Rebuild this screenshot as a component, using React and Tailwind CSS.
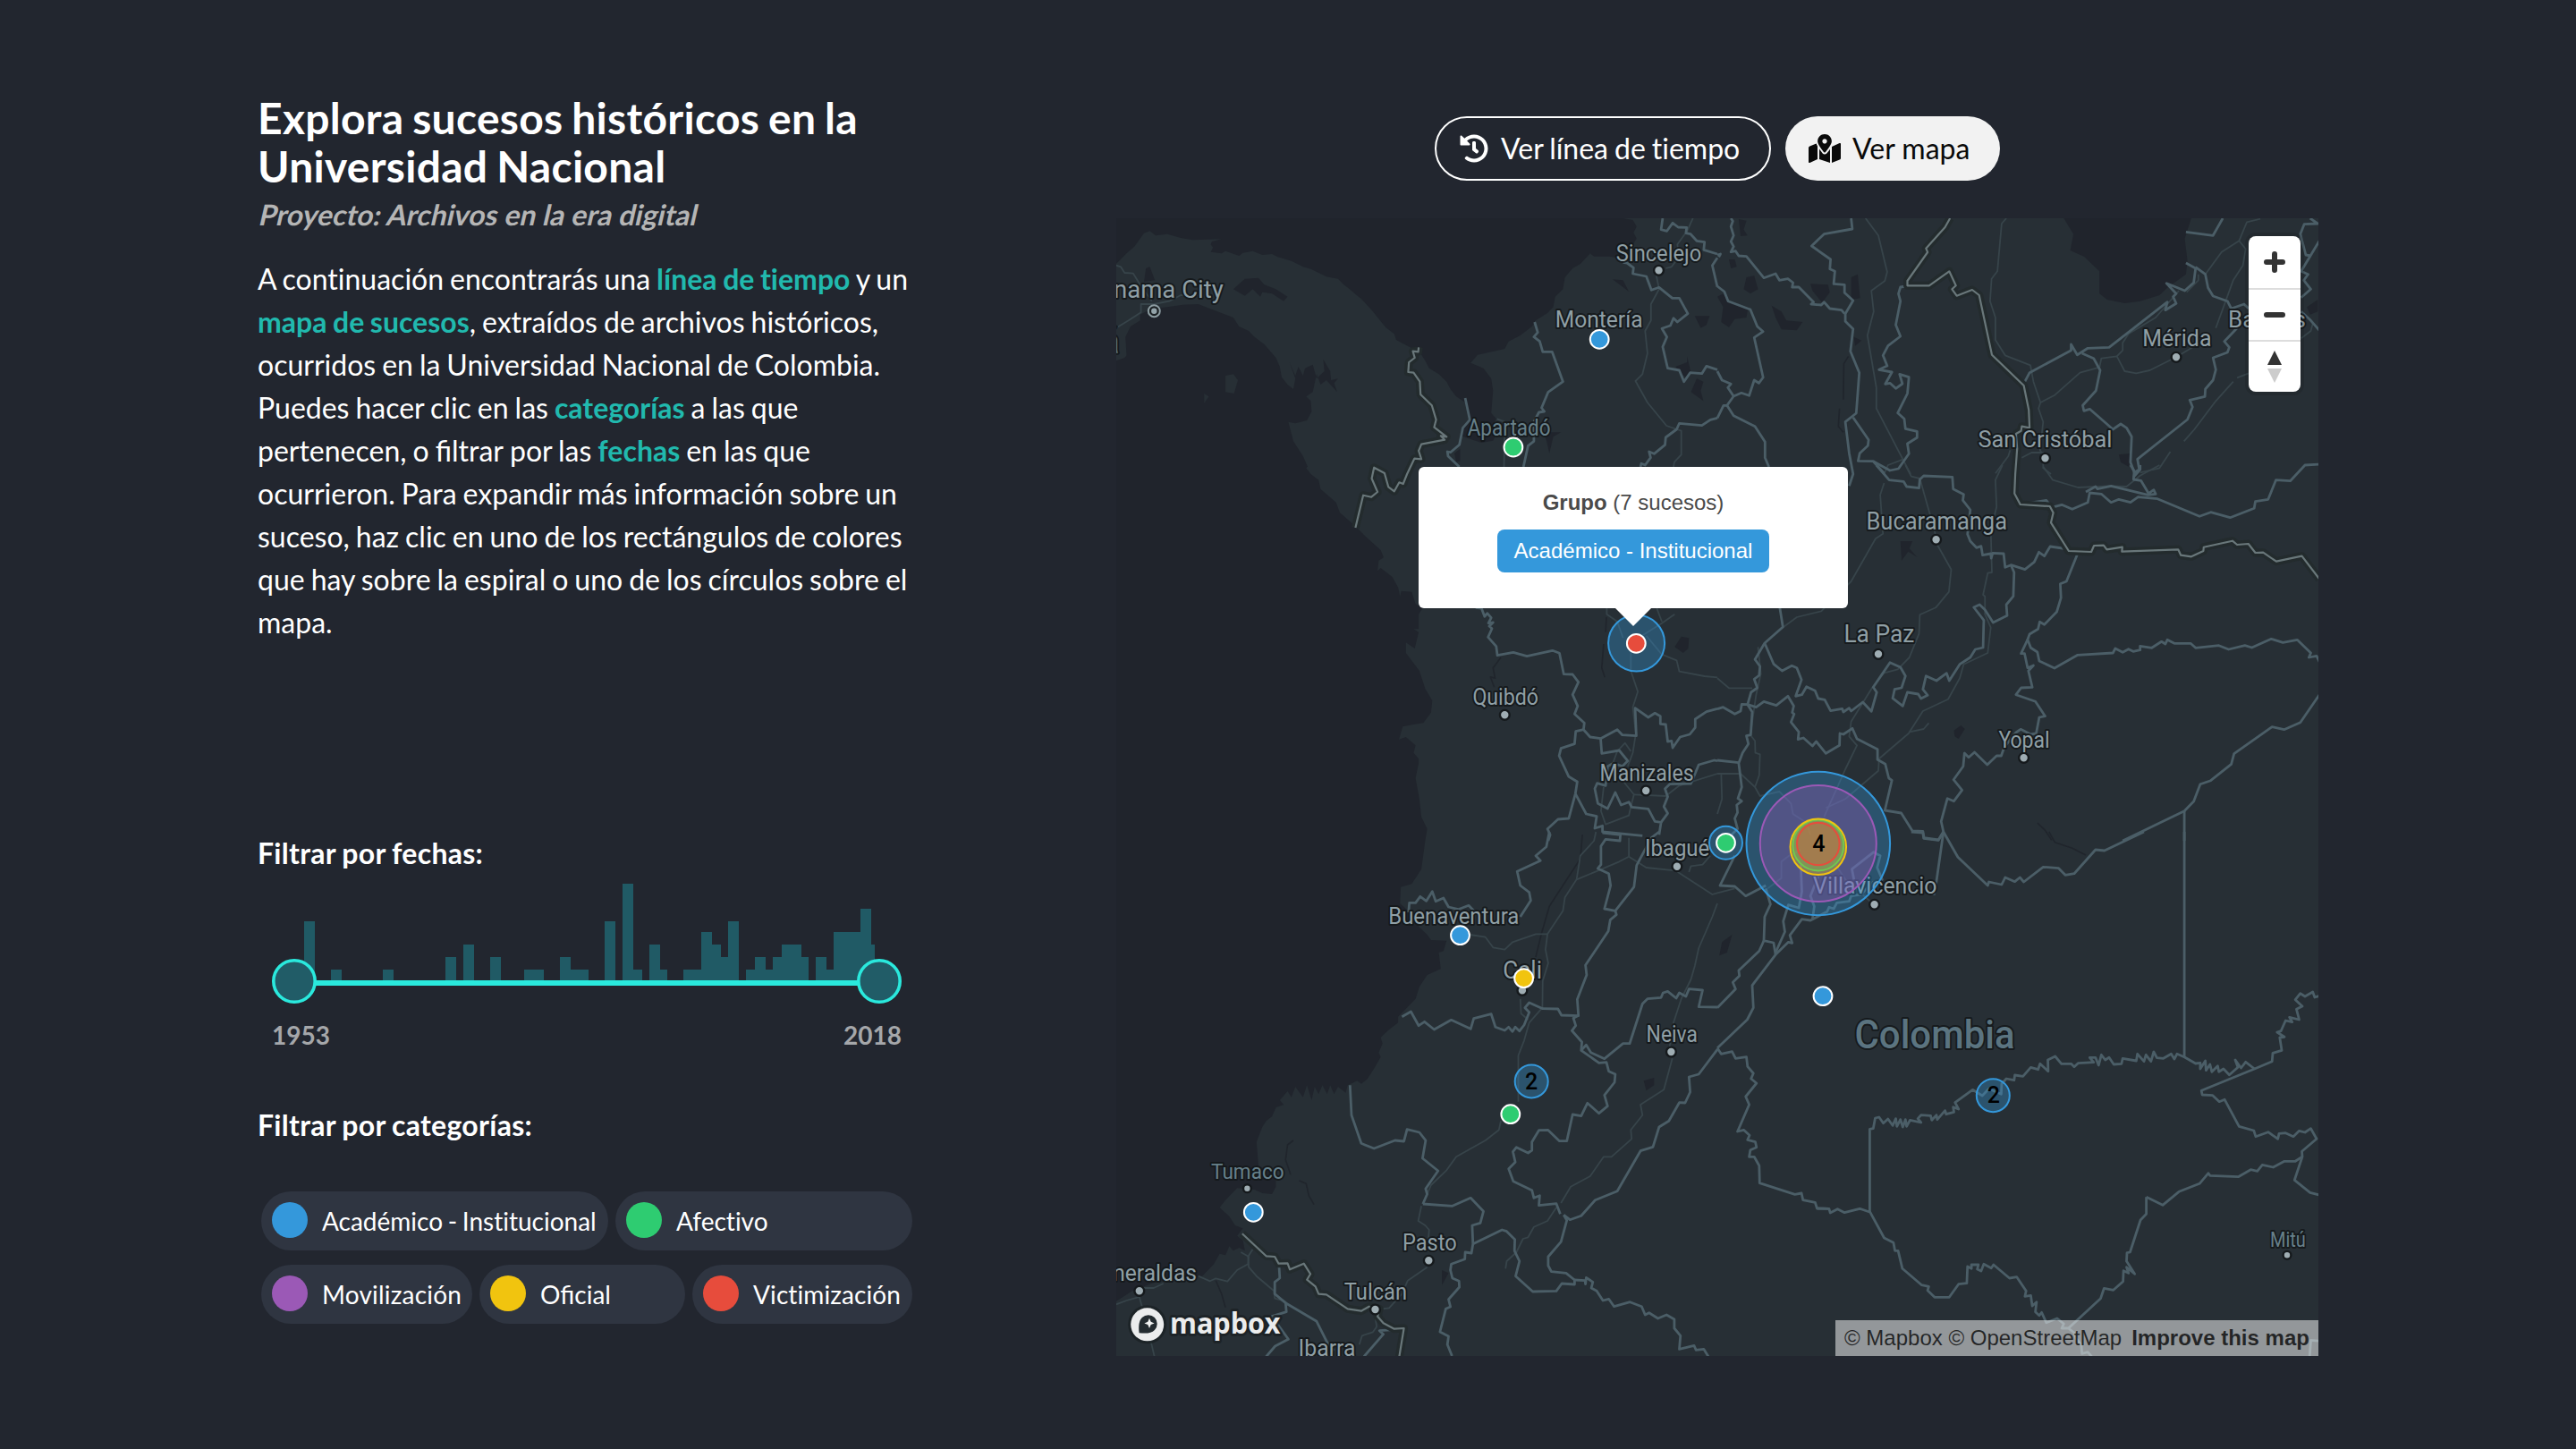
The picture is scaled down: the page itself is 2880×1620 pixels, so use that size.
import React from "react";
import { FaHistory, FaMapMarkedAlt } from "react-icons/fa";

/* ---------- Map geometry ---------- */

// Each survey tile keeps its own origin and an uneven x / y resolution.
const KX = 680 / 1568;
const KY = 1 / 3;
const ORIGINS = {
  a: [1240, 110],
  b: [1920, 110],
  c: [1240, 520],
  d: [1920, 520],
  e: [1240, 930],
  f: [1920, 930],
  g: [1240, 1270],
  h: [1920, 1270],
};

const project = (tile, raw) => {
  const [ox, oy] = ORIGINS[tile];
  return raw
    .trim()
    .split(/\s+/)
    .map((pair) => {
      const [x, y] = pair.split(",").map(Number);
      return `${(ox + x * KX).toFixed(1)},${(oy + y * KY).toFixed(1)}`;
    })
    .join(" ");
};

const caribbean = project(
  "a",
  "18,402 18,555 30,540 45,520 65,497 80,470 90,452 105,445 120,460 150,455 185,468 215,475 290,472 265,480 262,490 268,500 262,515 290,520 300,512 335,528 345,518 370,512 395,525 420,522 435,532 470,545 500,565 520,572 560,598 590,605 605,625 620,640 640,662 650,672 680,715 705,755 715,770 735,790 740,810 780,838 800,850 815,880 825,905 850,925 870,950 880,975 895,1000 918,1020 930,1075 915,1100 905,1130 925,1140 960,1155 990,1148 1000,1120 992,1090 998,1075 985,1055 990,980 985,940 965,905 932,887 950,860 1020,840 1030,815 1060,795 1090,765 1100,745 1130,720 1145,700 1150,665 1170,640 1175,600 1195,570 1215,555 1240,520 1250,530 1290,530 1330,540 1345,500 1360,470 1352,450 1360,430 1350,408 1325,402"
);

const pacific = [
  project(
    "a",
    "18,880 40,870 45,862 42,800 55,765 80,745 80,725 110,705 150,700 190,692 230,690 270,710 320,735 335,765 360,780 375,800 400,825 430,870 440,900 445,935 460,960 475,975 480,940 465,885 480,930 488,900 500,930 505,905 525,893 535,940 555,915 552,875 570,915 572,945 590,940 580,955 588,985 560,945 545,960 535,925 525,985 508,1000 520,1015 522,1050 510,1080 480,1090 462,1085 475,1150 490,1180 500,1200 512,1235"
  ),
  project(
    "c",
    "508,10 520,30 540,50 545,80 585,125 595,160 635,205 660,238 700,285 708,310 695,320 692,355 700,345 730,375 745,410 750,440 753,422 780,425 790,465 808,480 798,500 798,550 785,550 798,560 788,615 765,595 765,630 800,690 815,750 833,790 830,830 810,865 785,870 757,877 747,920 765,912 790,940 785,965 798,985 798,1000 790,1050 800,1120 805,1180 820,1220"
  ),
  project(
    "e",
    "815,30 805,125 780,175 752,185 750,240 775,270 800,320 820,345 830,363 870,365 862,400 850,405 855,460 820,480 800,520 790,560 745,620 745,640 720,665 700,690 705,710 695,740 700,755 685,790 680,800 665,830 650,845 640,835 615,850 610,875 590,855 580,880 570,850 562,880 550,850 540,880 530,855 522,900 510,850 500,890 480,855 470,890 460,870 440,900 450,915 430,925 420,955 405,970 395,990 380,1040 385,1120 400,1130 430,1140 430,1190 420,1215 395,1212"
  ),
  project(
    "g",
    "375,180 330,175 300,215 285,240 310,270 325,300 345,310 330,335 345,350 350,385 335,375 320,385 310,370 300,400 285,395 270,430 240,470 200,480 120,490 60,520 18,555"
  ),
  "1248,1455 1248,404",
].join(" ");

const water = [
  project("b", "893,402 918,455 910,510 945,530 985,580 985,655 1005,675 1050,687 1090,680 1140,660 1160,635 1208,590 1212,545 1205,470 1215,430 1222,402"),
  project("a", "320,640 350,605 385,602 400,625 430,640 460,665 450,680 420,655 395,650 390,665 370,640 350,662"),
  project("a", "95,570 105,565 118,610 90,615"),
  project("a", "1510,730 1548,730 1540,760 1525,770"),
  project("a", "1460,900 1490,885 1490,865 1500,920 1485,935"),
  project("a", "1515,940 1532,950 1525,980 1532,1015 1500,985"),
  project("a", "1120,1120 1165,1120 1145,1135 1135,1190 1128,1150"),
  project("a", "1298,607 1325,610 1340,648"),
  project("a", "890,1190 905,1175 905,1215 895,1220"),
  project("b", "55,405 75,410 68,440 78,460 60,462"),
  project("b", "30,540 45,540 50,565 35,570"),
  project("b", "75,600 95,595 105,640 85,655 68,640"),
  project("b", "240,622 285,625 290,650 270,685 245,645"),
  project("b", "345,600 362,590 368,670 345,675"),
  project("b", "0,665 15,655 30,685 80,700 75,735 45,740 30,768 10,750 15,700"),
  project("b", "140,695 165,715 178,745 220,750 205,778 165,775 150,735"),
  project("b", "352,800 372,812 355,830"),
  project("b", "1035,1195 1070,1190 1060,1235 1040,1220"),
  project("b", "1520,700 1548,675 1548,715 1528,725"),
  project("d", "472,255 503,255 495,280 515,308 492,290 475,320"),
  project("d", "610,890 628,873 638,885 622,918 612,910"),
  project("c", "1458,610 1475,575 1495,580 1493,615 1480,630"),
  project("e", "1378,835 1405,825 1405,850 1385,868"),
  project("g", "858,450 875,460 858,500"),
  project("f", "5,415 12,370 38,345 25,405"),
];

const islands = [
  project("a", "300,930 320,925 332,945 322,990 300,985"),
  project("a", "245,990 257,1000 245,1022"),
];

const provinceLines = [
  ["a", "1427,402 1423,440 1438,445 1453,418 1467,432 1489,433 1487,452 1499,455 1515,478 1535,482 1533,508 1568,522"],
  ["a", "1568,535 1555,560 1568,632"],
  ["a", "1325,550 1335,552 1352,568 1350,588 1385,597 1398,643 1418,634 1452,670 1470,670 1492,722 1465,750 1455,737 1447,762 1425,772 1438,800 1427,833 1440,905 1470,912 1482,950 1498,920 1528,923 1540,898 1568,910"],
  ["a", "1097,750 1105,785 1095,800 1110,815 1118,850 1142,850 1170,950 1132,985 1115,1038 1122,1050 1108,1053 1095,1085 1095,1150 1080,1165 1068,1236"],
  ["a", "918,1005 930,1078 912,1105 903,1162 880,1187 872,1185 874,1200 903,1236"],
  ["a", "1568,1072 1550,1078 1528,1097 1470,1090 1463,1110 1435,1137 1433,1162 1405,1192 1392,1185 1396,1205 1382,1230 1372,1225 1370,1236"],
  ["b", "0,630 18,648 28,680 85,708 103,765 118,782 95,802 118,936 107,955 95,945 82,997 62,988 42,999 25,1030 16,1030 0,1072"],
  ["b", "0,915 12,945 35,958 27,970 42,999"],
  ["b", "0,525 8,522 4,532"],
  ["b", "25,1030 42,1064 97,1100 123,1152 123,1205 133,1236"],
  ["b", "35,402 40,412 35,430 42,460 35,480 42,497 35,515 47,512 55,528 75,530 120,602 150,588 160,610 182,605 195,618 193,633 210,633 248,683 242,690 268,693 275,683 290,705 320,710 328,722"],
  ["b", "345,402 348,438 275,455 243,495 292,540 290,572 303,580 300,622 328,625 328,652 350,678 330,722 330,748 350,773 343,848 366,920 358,1056 330,1085 340,1190 350,1260 340,1300"],
  ["b", "350,1070 390,1145 388,1165 367,1190 363,1216 402,1217 430,1258"],
  ["b", "487,630 472,633 467,655 472,680 460,760 472,798 440,830 427,862 438,897 417,910 450,918 433,958 445,955 460,973 477,957 470,925 494,935 490,990 465,1055 482,1075 485,1108 515,1117 515,1138 490,1158 494,1192 467,1242 445,1248 402,1217"],
  ["b", "788,962 805,920 912,845 912,825 928,860 955,838 1010,835 1160,683 1155,710 1183,688 1175,665 1183,655 1158,620 1205,645 1228,618 1233,570 1208,552"],
  ["b", "1233,566 1258,590 1265,635 1278,663 1315,680 1325,705 1358,690 1370,705"],
  ["b", "940,855 970,872 987,912 976,980 942,1030 945,1048 960,1042 1020,1110 1040,1092 1055,1105 1068,1135 1065,1220 1075,1255 1088,1245 1083,1210 1212,1077 1225,1035 1218,1012 1257,1000 1258,975 1278,945 1285,910 1278,870 1315,852 1320,835 1307,815 1340,770"],
  ["b", "1208,448 1278,460 1303,402"],
  ["b", "1528,402 1548,420 1513,422 1503,455 1517,525 1530,528"],
  ["b", "1552,478 1505,580 1523,590 1512,610 1530,640 1505,668"],
  ["b", "1505,715 1530,745 1552,778"],
  ["d", "410,0 443,50 480,55 488,72 520,77 522,48 532,36 606,40 608,80 635,98 633,118 652,150 645,232 652,255 668,277 680,272 684,302 705,297 706,312 710,295 738,297 742,343 757,335 793,350 817,325 829,292 843,305 858,273 906,282"],
  ["d", "757,335 765,360 763,440 745,468 747,505 711,528 690,485 676,468 661,477 687,520 685,612 665,618 652,645 625,668 598,723 591,698 565,723 538,707 530,752 542,772 525,783 518,768 490,762 478,808 452,782 457,752 475,747 485,707 472,678 445,662 402,745 411,762 397,826 375,795 345,825 340,815 325,828 322,817 292,824 277,787 260,783 252,757 230,743 218,770 202,775 217,720 205,680 192,673 167,690 145,667 122,597"],
  ["d", "160,470 169,543 122,597 97,652 110,675 108,705 95,718 103,747 87,762 78,803"],
  ["d", "930,293 900,390 884,398 886,445 875,492 843,535 831,526 827,550 805,567 800,585 808,613 825,627 830,657 869,681 929,637 1020,630 1026,615 1045,628 1060,617 1072,625 1090,620 1090,607 1120,613 1145,592 1155,600 1160,586 1178,598 1220,598 1233,613 1293,605 1318,618 1360,605 1378,612 1428,583 1458,595 1495,586 1530,630 1525,645 1545,640 1552,660"],
  ["d", "800,585 783,632 792,632 800,680 815,672 802,690 812,745 783,747 770,770 820,793 845,842 830,846 822,900 808,903 782,886 770,897 740,945 732,975 720,975 696,1005 663,963 648,980 637,966 634,1010 609,1055 631,1090 610,1127 593,1118 577,1195 583,1230"],
  ["d", "781,132 848,118 862,142 888,133 915,148 955,125 960,93 990,97 1015,125 1035,115 1065,125 1085,107 1135,113 1243,172 1272,158 1322,176 1384,145 1387,122 1420,115 1440,50 1477,53 1515,0 1555,-3"],
  ["d", "950,90 975,72 980,80 1015,70 1110,100 1130,97 1125,83 1112,95 1092,52 1073,48 1075,20 1065,0"],
  ["d", "1090,0 1090,15 1073,40"],
  ["d", "1552,770 1503,863 1461,887 1430,878 1332,968 1325,1003 1272,1058 1245,1070 1228,1128 1204,1160 1045,1260"],
  ["d", "1204,1160 1204,1260"],
  ["d", "0,818 15,812 45,835 60,825 63,802 78,803 100,812 120,793 152,806 182,775 197,808 193,830 198,835 190,862 210,895 208,920 222,915 245,942 255,927 280,967 315,940 316,900 325,903 348,883 360,918 413,953 413,988 433,1003 442,1050 450,1057 432,1158 474,1167 503,1227 530,1228 533,1250 570,1257 583,1230"],
  ["d", "78,803 90,828 86,905 75,908 80,935 65,965 55,1000 63,1080 53,1118 63,1127 50,1140 52,1165 45,1185 52,1220 20,1260"],
  ["d", "0,990 55,998"],
  ["c", "945,478 960,480 968,508 975,497 985,512 978,530 990,528 980,540 987,548 977,577 998,608 1001,638 1042,628 1077,641 1143,622 1161,631 1172,701 1195,702 1210,728 1195,770 1208,808 1200,835 1225,865 1223,887 1203,893 1200,935 1165,950 1160,975 1185,1045 1207,1062 1202,1102 1185,1185 1157,1188 1130,1220 1137,1240 1132,1260"],
  ["c", "1223,887 1240,912 1267,917 1310,887 1323,905 1359,908 1356,815 1390,846 1407,832 1421,842 1421,868 1435,870 1440,927 1450,925 1453,948 1472,912 1497,903 1511,880 1511,852 1540,827 1568,817"],
  ["c", "1267,917 1270,967 1315,957 1337,992 1323,1010 1300,1000 1285,1010 1280,1075 1258,1067 1252,1085 1260,1135 1285,1152 1305,1098 1320,1140 1340,1130 1347,1147 1390,1153 1407,1195 1423,1198 1418,1240"],
  ["c", "1202,1102 1230,1170 1257,1178 1252,1218 1272,1210 1272,1230 1375,1243"],
  ["c", "1423,1198 1440,1168 1430,1145 1440,1112 1433,1085 1445,1070 1500,1068 1520,1005 1560,990 1568,992"],
  ["e", "1135,0 1127,50 1100,80 1112,97 1052,133 1060,180 1083,203 1087,230 1060,285"],
  ["e", "755,620 778,603 798,650 813,637 838,663 882,631 932,661 940,626 985,611 996,655 1020,666 1030,655 1040,670 1047,655 1058,668 1070,648 1083,605 1072,590 1083,573 1118,593 1157,594 1166,615 1210,617 1207,562 1231,480 1228,447 1287,333 1292,295 1308,278 1305,265 1277,258 1293,180 1288,140 1260,123 1268,110 1268,48 1280,25 1317,30 1318,10 1272,3"],
  ["e", "1305,265 1353,185 1360,112 1398,20 1418,0"],
  ["e", "772,270 774,238 790,238 802,217 818,232 833,200 842,233 862,222 875,252 900,260 927,247 940,265"],
  ["e", "1208,617 1197,625 1203,650 1193,667 1219,705 1217,733 1263,775 1282,773 1288,803 1305,813 1303,840 1277,883 1285,920 1263,944 1233,910 1217,953 1195,948 1180,1037 1161,1037 1131,1000 1108,1001 1090,1040 1090,1068 1080,1077 1050,1058 1041,1073 1047,1108 1030,1130 1042,1172 1090,1202 1095,1228 1110,1220 1108,1253 1153,1247 1163,1282"],
  ["e", "1217,733 1230,715 1242,740 1277,761 1325,710 1342,710 1375,577 1388,560 1423,556 1428,540 1440,535 1462,558 1470,540 1487,552 1495,527 1530,531 1520,587 1568,588"],
  ["e", "1568,730 1520,813 1495,822 1498,873 1485,909 1470,908 1443,970 1418,990 1402,1057 1370,1070 1310,1205 1253,1235 1217,1288 1188,1301 1172,1285"],
  ["e", "621,850 625,950 650,1045 683,1062 737,1035 760,1038 768,998 800,1008 816,1035 808,1095 848,1137 816,1197 820,1215 809,1248"],
  ["f", "500,0 530,3 532,22 570,28 583,0 620,85 697,180 700,168 733,177 742,153 767,167 780,153 790,168 840,118 880,122 897,145 920,140 975,60 998,63 1100,0"],
  ["f", "583,0 565,165 558,212"],
  ["f", "1204,0 1204,755 1233,777 1245,775 1245,795 1258,768 1260,800 1270,780 1275,805 1290,785 1293,805 1305,795 1320,815 1342,790 1335,765 1350,792 1362,772 1385,795 1248,868 1250,882 1277,884 1294,905 1308,898 1345,988 1383,1002 1388,1022 1420,1007 1445,1030 1448,1012 1465,1010 1485,1022 1500,1003 1515,1008 1530,995 1545,1030 1507,1072 1508,1090 1488,1168 1528,1210 1552,1218"],
  ["f", "1385,795 1430,770 1432,742 1455,733 1450,690 1462,688 1443,672 1453,668 1465,633 1482,638 1475,622 1500,630 1493,595 1508,585 1490,563 1503,542 1515,552 1535,537 1540,555 1552,550"],
  ["f", "1508,1090 1490,1105 1462,1105 1433,1125 1405,1117 1392,1138 1375,1133 1343,1157 1270,1153 1266,1145 1243,1180 1190,1207 1148,1252 1106,1225"],
  ["f", "1204,755 1185,745 1178,762 1170,745 1150,760 1133,758 1125,738 1118,770 1105,748 1100,770 1083,745 1080,768 1045,760 1042,778 1022,780 1010,757 1000,765 990,748 983,783 975,757 960,757 970,773 930,776 920,788 912,778 887,778 871,753 852,765 853,803 832,778 827,797 808,790 788,820 767,816 765,833 745,828 733,845 732,880 700,862 683,885 658,865 613,908 622,930 608,923 610,940 590,947 587,935 567,965 565,950 553,967 550,952 525,950 517,962 525,975 497,967 488,988 485,965 478,990 472,965 463,988 460,962 452,985 440,963 428,977 417,957 407,960 402,995 393,997 393,1276"],
  ["f", "0,725 10,745 38,737 47,760 75,755 78,787 93,810 87,828 101,843 73,888 82,915 52,1005 68,1000 83,1018 78,1033 98,1040 101,1058 85,1067 82,1090 95,1090 108,1120 109,1178 200,1216 217,1212 221,1235 252,1243 257,1263 288,1264"],
  ["f", "0,725 77,630 93,590 90,515 150,412 183,370 193,373 187,347 218,293 240,297 283,268 288,253 300,258 308,238 340,233 345,215 370,210 400,170 425,160 412,120 420,80 403,68 347,125 352,160"],
  ["f", "150,412 145,372 120,365 122,285 137,243 125,190"],
  ["f", "125,180 73,215 45,183 7,180 45,80"],
  ["f", "120,365 108,400 55,465 57,483 40,505 47,527 0,590"],
  ["f", "150,405 174,335 170,300 183,245 210,255 218,200 215,110"],
  ["f", "245,295 250,250 240,215 260,150"],
  ["g", "809,228 885,235 932,208 965,253 957,292 936,300 938,362 934,393 918,390 917,413 882,430 880,450 885,477 902,487 903,507 875,548 880,573 868,580 853,657 875,672 872,700 884,738"],
  ["g", "938,362 1013,315 1025,320 1046,347 1045,385 1058,420 1048,470 1092,522 1153,520 1167,495 1200,498 1200,483 1178,460 1140,455 1132,435 1132,405 1165,355 1180,283 1172,265"],
  ["g", "1200,483 1227,485 1228,497 1230,475 1247,490 1243,510 1257,520 1273,552 1288,547 1302,572 1343,557 1373,572 1382,600 1392,593 1415,612 1437,600 1457,615 1457,645 1473,670 1470,715 1508,703 1513,718 1533,715 1545,740"],
  ["g", "438,430 440,477 427,490 427,530 455,560 457,590 420,605 462,682 428,705 405,740"],
  ["g", "455,560 535,622 562,692 580,720"],
  ["g", "657,740 707,665 697,653 755,648"],
  ["h", "257,243 288,244 291,258 310,245 328,257 367,244 394,256 430,342 454,358 458,385 466,385 477,445 527,500 545,505 542,518 560,541 598,541 622,497 643,494 645,438 655,445 655,432 673,432 670,447 680,453 687,430 706,443 712,432 753,477 772,473 796,520 793,538 808,535 812,570 823,557 820,590 830,602 836,592 848,626 876,612 893,630 888,645 905,645 920,660 925,680 938,700 940,730 955,725 965,740"],
  ["h", "905,645 988,545 997,511 1021,517 1046,488 1047,452 1060,460 1055,440 1076,463 1055,420 1056,392 1064,390 1091,282 1106,262 1106,205"],
  ["h", "1527,740 1530,685 1552,688"],
].map(([t, p]) => project(t, p));

const countryLines = [
  project("a", "798,835 797,850 783,848 788,870 773,885 771,918 785,920 801,950 803,993 832,1030 843,1078 838,1103 870,1135 855,1132 865,1145 805,1160 798,1182 805,1210 787,1208 768,1260") +
    " " +
    project("c", "758,63 748,58 735,88 720,73 710,27 683,8 677,45 692,90 676,107 655,101 635,210"),
  project("b", "600,402 587,432 538,503 542,516 490,612 490,628 546,628 598,580 615,628 605,640 617,662 657,642 675,660 708,860 790,963 803,1045 805,1105 785,1100 783,1115 770,1125 773,1175 768,1260") +
    " " +
    project("d", "766,95 781,132 857,138 866,160 860,193 906,288 964,291 971,270 996,269 1004,283 1044,275 1043,290 1188,283 1195,302 1222,307 1253,288 1254,275 1328,254 1340,267 1369,264 1387,294 1407,293 1441,323 1507,305 1552,382"),
  project("g", "343,328 405,403 427,405 437,428 460,427 466,448 502,428 519,463 510,482 532,505 540,530 560,532 615,580 650,587 670,572 697,580 692,605 707,628 735,647 760,645 748,740"),
];

const roads = [
  ["a", "1505,402 1490,445 1465,490 1470,530 1450,565 1435,570"],
  ["a", "1410,590 1418,640 1397,690 1397,745 1382,780 1388,855 1375,925 1357,948 1388,1020 1437,1098 1475,1115 1475,1195 1457,1220 1455,1236"],
  ["a", "18,770 50,745 82,718 82,690 115,690 155,680 185,660 230,660"],
  ["a", "18,560 30,565 40,585 62,587 80,625 110,680"],
  ["a", "1000,1075 1020,1085 1018,1236"],
  ["b", "382,402 415,460 438,582 432,612 397,645 403,715 387,795 410,970 410,1040 498,1260"],
  ["b", "745,402 733,420 722,580 707,605 703,680 717,735 717,810 742,862 807,895 815,950 833,1020 828,1040 840,1085 832,1180 845,1207"],
  ["b", "833,1020 870,995 935,920 985,902 990,872 1030,865 1050,915 1080,922 1115,912 1183,868 1250,815"],
  ["b", "1030,865 1045,845 1045,820 1060,790 1130,735 1190,645"],
  ["b", "1240,590 1240,610 1210,650"],
  ["b", "1258,590 1300,515 1345,478 1362,505 1355,560 1330,610 1305,700 1285,770"],
  ["b", "1345,478 1365,415 1400,404"],
  ["b", "1203,1150 1230,1110 1285,1015 1330,950"],
  ["b", "1340,937 1370,922"],
  ["b", "1505,805 1530,780 1535,755"],
  ["b", "717,1258 750,1200 755,1180"],
  ["b", "785,1205 810,1188 840,1188 840,1240 860,1260"],
  ["b", "1168,1185 1140,1240 1090,1255"],
  ["b", "430,1260 440,1230 480,1210"],
  ["d", "485,0 500,38 522,45 548,165 564,240"],
  ["d", "564,260 603,350 597,425 563,478 522,502 520,565 495,645 465,685 430,697 400,745 345,860 340,910 360,940 330,1020 275,1180"],
  ["d", "430,60 420,100 427,230 408,247 345,390 268,490 205,510 165,548"],
  ["d", "735,0 717,50 720,140 705,220 708,360 697,362 685,435 690,440 690,500 705,545 697,630 635,668 625,715 595,785 530,825 493,900 417,985 415,1025 330,1120 280,1150"],
  ["d", "495,895 532,885 545,865"],
  ["d", "840,5 865,50 930,75 1010,70 1055,72 1090,35 1140,0"],
  ["d", "0,715 30,748 90,748"],
  ["d", "105,610 112,700 100,770 85,905 97,925 98,965 110,970 108,1040 97,1080 60,1035 0,1035"],
  ["d", "97,1080 110,1110 160,1095 190,1135 195,1170 230,1200 240,1240"],
  ["d", "10,1035 12,1120 0,1170"],
  ["c", "1283,480 1283,500 1310,525 1325,580"],
  ["c", "1345,620 1345,690 1363,760 1350,812 1358,900 1350,965 1337,1010"],
  ["c", "1385,572 1425,635 1463,655 1470,692 1535,708 1568,712"],
  ["c", "1458,500 1425,530 1370,575"],
  ["c", "1412,480 1425,525"],
  ["c", "1325,1060 1353,1105 1345,1145"],
  ["c", "1353,1105 1435,1110 1470,1075 1568,1035"],
  ["c", "1275,1080 1268,1160 1280,1205 1300,1195 1340,1175 1345,1145"],
  ["c", "1293,1020 1310,960 1330,932 1345,960"],
  ["e", "930,345 970,353 990,388 1020,395 1040,370 1100,343 1130,343 1125,395 1132,440 1118,500 1117,590 1083,640 1070,700 1055,750 1055,905"],
  ["e", "1130,343 1170,265 1175,220 1205,160 1215,80 1250,30 1255,0"],
  ["e", "1205,160 1270,125 1315,100 1340,83 1340,20"],
  ["e", "1340,83 1385,120 1460,130 1555,210 1568,205"],
  ["e", "1010,970 1005,1000 970,1035 895,1090 870,1135 830,1185 820,1215"],
  ["e", "1060,560 1062,610 1080,630"],
  ["e", "1568,240 1555,285 1520,390 1510,450 1500,495 1475,560 1455,640 1445,720"],
  ["e", "1452,760 1430,865 1370,915 1375,950 1345,1000 1347,1030 1295,1090 1275,1090 1240,1155 1190,1190 1165,1245"],
  ["e", "1495,135 1500,115 1530,110 1550,80"],
  ["f", "130,190 165,155 165,100 185,80 215,60"],
  ["f", "0,205 45,190"],
  ["f", "300,100 330,160 400,240"],
  ["g", "340,390 360,405 358,430 330,450 305,488 275,478 260,487 230,470"],
  ["g", "140,495 115,510 80,510"],
  ["g", "78,540 95,620 117,740"],
  ["g", "18,565 45,552 78,540"],
  ["g", "370,380 358,405 360,440 380,470 425,520 427,545 455,555"],
  ["g", "685,600 690,640 680,658 652,670 645,700"],
  ["g", "805,235 797,285 815,300 825,315 823,345"],
  ["g", "820,440 770,485 755,530 722,577 705,580"],
  ["g", "1153,240 1130,285 1095,305 1080,340 1067,345 1050,390 1025,420 1022,445"],
].map(([t, p]) => project(t, p));

// Thin, broken river courses
const rivers = [
  ["b", "338,865 326,890 325,1010"],
  ["b", "315,1040 312,1100 325,1120"],
  ["c", "1282,510 1280,560"],
  ["c", "1275,600 1270,680 1278,712"],
  ["c", "1010,645 990,680 995,715 983,710 993,745"],
  ["e", "1220,10 1215,90 1180,160 1135,250 1115,340 1100,420"],
  ["g", "475,15 460,30 455,80 468,130"],
  ["g", "490,150 508,160 515,200 528,230"],
  ["g", "275,485 290,530 300,575"],
  ["f", "855,0 870,35 915,55 950,78"],
  ["d", "825,1200 845,1225 862,1258"],
].map(([t, p]) => project(t, p));

// [text, x, width, baseline, size, dim]
const labels = [
  ["Panama City", 1212.7, 155.2, 332.8, 28],
  ["Sincelejo", 1806.8, 95.4, 291.5, 25.5],
  ["Montería", 1738.7, 98, 365.8, 26],
  ["Apartadó", 1640.7, 92.8, 486.5, 25, true],
  ["Mérida", 2395.3, 77.2, 387.2, 26],
  ["Barinas", 2491.1, 86.8, 365.5, 26],
  ["San Cristóbal", 2211.4, 150.1, 499.8, 26],
  ["Bucaramanga", 2086.5, 157.5, 591.5, 27],
  ["La Paz", 2061.4, 79, 718.2, 28],
  ["Yopal", 2234.4, 57.3, 835.8, 25.5],
  ["Quibdó", 1646.4, 73.6, 787.5, 25.5],
  ["Manizales", 1788.6, 105, 873.2, 25.5],
  ["Ibagué", 1838.9, 72.4, 957.2, 26],
  ["Buenaventura", 1552.2, 146.2, 1033.2, 25.5],
  ["Cali", 1680.2, 43.8, 1093.5, 28],
  ["Neiva", 1840.6, 57.3, 1165.2, 25.5],
  ["Tumaco", 1354, 81.6, 1317.5, 24.5, true],
  ["Pasto", 1567.9, 60.7, 1397.5, 26],
  ["Tulcán", 1502.8, 70.2, 1452.5, 25.5],
  ["Esmeraldas", 1209.6, 128.4, 1432.2, 25.5],
  ["Ibarra", 1451.6, 63.8, 1515.5, 25],
  ["Mitú", 2538, 39.9, 1393.8, 23.5, true],
  ["Villavicencio", 2027.1, 138.4, 999.2, 26],
];

const towns = [
  [1854.5, 302.3], [2433, 399.3], [2286.5, 512.3], [2164.6, 603.3], [2100, 731.3],
  [2262.6, 847.3], [1682.3, 799.3], [1840.2, 884], [1874.9, 968.7], [1701.9, 1107.3],
  [1868.4, 1176], [1394.4, 1328.7, 3.2], [1597.3, 1409.3], [1537.5, 1464], [1273.8, 1443.3],
  [2557, 1403.3, 3.2], [2095.6, 1011.3],
];

const BLUE = "#3498db";
const GREEN = "#2ecc71";
const PURPLE = "#9b59b6";
const YELLOW = "#f1c40f";
const RED = "#e74c3c";

const clusters = [
  [1829.6, 719, 31.5, BLUE],
  [1929.5, 942.3, 18.5, BLUE],
  [1712.2, 1209, 18.5, BLUE],
  [2228.3, 1224.7, 18.5, BLUE],
  [2032.8, 943, 80.3, BLUE],
  [2032.8, 943, 65, PURPLE],
  [2032.8, 945, 28.5, GREEN],
  [2032.8, 946.8, 31.3, YELLOW],
  [2032.8, 943.5, 23.8, RED],
];

const markers = [
  [1788.2, 379.3, BLUE],
  [1691.9, 500, GREEN],
  [1829.3, 719.3, RED],
  [1929.5, 942.3, GREEN],
  [1632.5, 1045.7, BLUE],
  [1703.6, 1093.7, YELLOW],
  [1688.8, 1245.7, GREEN],
  [2038, 1113.7, BLUE],
  [1401.3, 1355.3, BLUE],
];

const counts = [
  ["4", 2033.4, 952.4],
  ["2", 1712.2, 1217.7],
  ["2", 2228.8, 1233],
];

function MapCanvas() {
  return (
    <svg viewBox="1248 244 1344 1272" className="block h-full w-full font-['Roboto',sans-serif]">
      <rect x="1248" y="244" width="1344" height="1272" fill="#272f35" />
      <g fill="#20242c">
        <polygon points={caribbean} />
        <polygon points={pacific} />
        {water.map((p, i) => (
          <polygon key={i} points={p} />
        ))}
      </g>
      <g fill="#272f35">
        {islands.map((p, i) => (
          <polygon key={i} points={p} />
        ))}
      </g>
      <g fill="none" strokeLinejoin="round">
        {rivers.map((p, i) => (
          <polyline key={i} points={p} stroke="#20252c" strokeWidth="1.6" />
        ))}
        {roads.map((p, i) => (
          <polyline key={i} points={p} stroke="#37444a" strokeWidth="1.8" />
        ))}
        {provinceLines.map((p, i) => (
          <polyline key={i} points={p} stroke="#4b5e67" strokeWidth="2.8" />
        ))}
        {countryLines.map((p, i) => (
          <polyline key={i} points={p} stroke="#232b2d" strokeWidth="9" />
        ))}
        {countryLines.map((p, i) => (
          <polyline key={i} points={p} stroke="#69777a" strokeWidth="2.2" />
        ))}
      </g>

      <circle cx="1290.3" cy="347.7" r="6.5" fill="#1c2124" stroke="#8d9da2" strokeWidth="2" />
      <circle cx="1290.3" cy="347.7" r="3.2" fill="#93a3a9" />
      {towns.map(([x, y, r = 4.2], i) => (
        <circle key={i} cx={x} cy={y} r={r + 1.2} fill="#9fadb3" stroke="#15191c" strokeWidth="2.4" />
      ))}

      <g stroke="#14181a" strokeOpacity="0.9" strokeWidth="4" strokeLinejoin="round" paintOrder="stroke">
        {labels.map(([text, x, w, y, size, dim]) => (
          <text
            key={text}
            x={x}
            y={y}
            fontSize={size}
            textLength={w}
            lengthAdjust="spacingAndGlyphs"
            fill={dim ? "#67808a" : "#8f9fa5"}
          >
            {text}
          </text>
        ))}
        <text x="1252" y="395" fontSize="38" textAnchor="end" fill="#55707f">
          Panamá
        </text>
        <text
          x="2073.5"
          y="1171.7"
          fontSize="43.5"
          fontWeight="500"
          textLength="179"
          lengthAdjust="spacingAndGlyphs"
          fill="#5b7480"
        >
          Colombia
        </text>
      </g>

      {clusters.map(([x, y, r, color], i) => (
        <circle key={i} cx={x} cy={y} r={r} fill={color} fillOpacity="0.34" stroke={color} strokeWidth="2" />
      ))}
      {markers.map(([x, y, color], i) => (
        <circle key={i} cx={x} cy={y} r="10.4" fill={color} stroke="#ffffff" strokeWidth="2" />
      ))}
      <g fontSize="25" textAnchor="middle" fontWeight="500" fill="#000000">
        {counts.map(([n, x, y], i) => (
          <text key={i} x={x} y={y}>
            {n}
          </text>
        ))}
      </g>
    </svg>
  );
}

function Popup() {
  return (
    <div className="absolute left-[338px] top-[278px] flex w-[480px] flex-col items-center font-['Liberation_Sans',Arial,sans-serif] text-[24px] leading-[40px]">
      <div className="flex h-[158px] w-full flex-col items-center rounded-[6px] bg-white pt-[20px]">
        <p className="text-[#4a4a4a]">
          <b>Grupo</b> (7 sucesos)
        </p>
        <span className="mt-[10px] flex h-[48px] w-[304px] items-center justify-center whitespace-nowrap rounded-[8px] bg-[#3498db] text-white">
          Académico - Institucional
        </span>
      </div>
      <div className="h-0 w-0 border-x-[20px] border-t-[20px] border-x-transparent border-t-white" />
    </div>
  );
}

function MapControls() {
  return (
    <div className="absolute right-[20px] top-[20px] flex w-[58px] flex-col overflow-hidden rounded-[8px] bg-white shadow-[0_0_0_4px_rgba(0,0,0,0.1)]">
      <button className="grid h-[58px] place-items-center">
        <svg viewBox="0 0 24 24" className="h-6 w-6">
          <path d="M12 3v18M3 12h18" stroke="#333" strokeWidth="6" strokeLinecap="round" />
        </svg>
      </button>
      <button className="grid h-[58px] place-items-center border-t-2 border-[#ddd]">
        <svg viewBox="0 0 24 24" className="h-6 w-6">
          <path d="M3 12h18" stroke="#333" strokeWidth="6" strokeLinecap="round" />
        </svg>
      </button>
      <button className="grid h-[58px] place-items-center border-t-2 border-[#ddd]">
        <svg viewBox="0 0 16 36" className="h-9 w-4">
          <path d="M0 16 8 0l8 16z" fill="#333" />
          <path d="M0 20l8 16 8-16z" fill="#ccc" />
        </svg>
      </button>
    </div>
  );
}

function MapboxLogo() {
  return (
    <svg viewBox="1256 1454 184 56" className="absolute bottom-[6px] left-[8px] h-[56px] w-[184px]">
      <g stroke="#1a2023" strokeOpacity="0.75" strokeWidth="6" paintOrder="stroke" strokeLinejoin="round">
        <circle cx="1282.7" cy="1480.8" r="18.5" fill="#ebeced" />
        <text
          x="1308"
          y="1490.6"
          fontSize="33"
          fontWeight="700"
          textLength="123.5"
          lengthAdjust="spacingAndGlyphs"
          fill="#ebeced"
          className="font-['Open_Sans',sans-serif]"
        >
          mapbox
        </text>
      </g>
      <path d="M1273.6 1490.2c-.9-8-.3-13.6 3.3-17.2a9.900 9.900 0 0 1 14 14c-3.600 3.600-9.300 4.100-17.300 3.200z" fill="#232b30" />
      <path d="M1285 1473.800l1.700 3.900 3.900 1.700-3.900 1.700-1.700 3.900-1.700-3.900-3.900-1.700 3.900-1.700z" fill="#f2f3f3" />
    </svg>
  );
}

/* ---------- Date filter ---------- */

// [left, width, height] of each column above the track
const bars = [
  [52, 12, 68], [82, 12, 14], [140, 12, 14], [210, 12, 28], [230, 12, 42], [260, 12, 28],
  [298, 22, 14], [338, 12, 28], [350, 20, 14], [388, 12, 68], [408, 12, 110], [420, 10, 14],
  [438, 12, 42], [450, 8, 14], [476, 20, 14], [496, 12, 56], [508, 10, 42], [518, 8, 28],
  [526, 12, 68], [546, 10, 14], [556, 12, 28], [568, 8, 14], [576, 10, 28], [586, 22, 42],
  [608, 8, 28], [624, 12, 28], [636, 8, 14], [644, 30, 56], [674, 12, 82], [686, 4, 42],
];

function DateSlider() {
  return (
    <svg viewBox="0 0 732 150" className="block h-[150px] w-[732px]">
      <g fill="#205a65" shapeRendering="crispEdges">
        {bars.map(([x, w, h]) => (
          <rect key={x} x={x} y={126 - h} width={w} height={h} />
        ))}
      </g>
      <rect x="50" y="124" width="640" height="6" fill="#2ae9dd" />
      <circle cx="41" cy="125" r="23.2" fill="#215c67" stroke="#2ae9dd" strokeWidth="3.6" />
      <circle cx="695" cy="125" r="23.2" fill="#215c67" stroke="#2ae9dd" strokeWidth="3.6" />
    </svg>
  );
}

function Category({ dot, className, children }) {
  return (
    <button className={`flex h-[66px] items-center rounded-[33px] bg-[#2f3541] pl-3 ${className}`}>
      <span className={`relative -top-px h-10 w-10 rounded-full ${dot}`} />
      <span className="ml-4 whitespace-nowrap text-[28px] leading-[42px]">{children}</span>
    </button>
  );
}

const Em = ({ children }) => <span className="font-bold text-[#21b9ae]">{children}</span>;

// Joins "f" and "i" inside text whose other ligatures are off
const Lig = ({ children }) => <span className="[font-variant-ligatures:common-ligatures]">{children}</span>;

export default function App() {
  return (
    <div className="flex h-[1620px] w-[2880px] overflow-hidden bg-[#22262f] pl-[288px] font-['Lato',sans-serif] text-white [font-variant-ligatures:none]">
      <aside className="flex w-[736px] shrink-0 flex-col pt-[105px]">
        <h1 className="whitespace-nowrap text-[48px] font-bold leading-[54px] tracking-[0.28px] [word-spacing:-2.1px]">
          Explora sucesos históricos en la
          <br />
          Universidad Nacional
        </h1>
        <h2 className="mt-[3px] origin-[0_36px] -skew-x-[13deg] whitespace-nowrap text-[32px] font-bold leading-[48px] text-[#b5b5b5]">
          Proyecto: Archivos en la era digital
        </h2>
        <p className="mt-[24px] flex flex-col whitespace-nowrap text-[32px] leading-[48px] [word-spacing:-1.2px]">
          <span>
            A continuación encontrarás una <Em>línea de tiempo</Em> y un
          </span>
          <span>
            <Em>mapa de sucesos</Em>, extraídos de archivos históricos,
          </span>
          <span>ocurridos en la Universidad Nacional de Colombia.</span>
          <span>
            Puedes hacer clic en las <Em>categorías</Em> a las que
          </span>
          <span>
            pertenecen, o <Lig>filtrar</Lig> por las <Em>fechas</Em> en las que
          </span>
          <span>ocurrieron. Para expandir más información sobre un</span>
          <span>suceso, haz clic en uno de los rectángulos de colores</span>
          <span>que hay sobre la espiral o uno de los círculos sobre el</span>
          <span>mapa.</span>
        </p>

        <h3 className="mt-[216px] text-[32px] font-bold leading-[36px] tracking-[0.28px] [word-spacing:-1px]">
          Filtrar por fechas:
        </h3>
        <DateSlider />
        <div className="ml-[16px] mt-[14px] flex w-[704px] justify-between text-[28px] font-bold leading-[42px] text-[#a5a7aa]">
          <span>1953</span>
          <span>2018</span>
        </div>

        <h3 className="mt-[62px] text-[32px] font-bold leading-[36px] tracking-[0.28px] [word-spacing:-1px]">
          Filtrar por categorías:
        </h3>
        <div className="ml-[4px] mt-[56px] flex flex-col gap-4">
          <div className="flex gap-2">
            <Category dot="bg-[#3498db]" className="w-[388px]">
              <span className="[word-spacing:-1.5px]">Académico - Institucional</span>
            </Category>
            <Category dot="bg-[#2ecc71]" className="w-[332px]">
              Afectivo
            </Category>
          </div>
          <div className="flex gap-2">
            <Category dot="bg-[#9b59b6]" className="w-[236px]">
              <span className="tracking-[0.2px]">Movilización</span>
            </Category>
            <Category dot="bg-[#f1c40f]" className="w-[230px]">
              <Lig>Oficial</Lig>
            </Category>
            <Category dot="bg-[#e74c3c]" className="w-[246px]">
              <span className="tracking-[0.1px]">Victimización</span>
            </Category>
          </div>
        </div>
      </aside>

      <main className="ml-[224px] flex w-[1344px] flex-col pt-[130px]">
        <nav className="flex justify-center gap-4 text-[32px] leading-[48px]">
          <button className="flex h-[72px] w-[376px] items-center whitespace-nowrap rounded-full border-2 border-white pl-[26px]">
            <FaHistory className="h-8 w-8" />
            <span className="ml-[14px] [word-spacing:-1.2px]">Ver línea de tiempo</span>
          </button>
          <button className="flex h-[72px] w-[240px] items-center whitespace-nowrap rounded-full bg-[#f2f2f2] pl-[26px] text-[#0a0a0a]">
            <FaMapMarkedAlt className="h-8 w-9" />
            <span className="ml-[13px]">Ver mapa</span>
          </button>
        </nav>
        <section className="relative mt-[42px] h-[1272px] w-[1344px] overflow-hidden">
          <MapCanvas />
          <Popup />
          <MapControls />
          <MapboxLogo />
          <div className="absolute bottom-0 right-0 flex h-[40px] w-[540px] items-center whitespace-nowrap bg-white/50 pl-[10px] font-['Liberation_Sans',Arial,sans-serif] text-[24px] text-black/75">
            <span>© Mapbox © OpenStreetMap</span>
            <b className="ml-[11px]">Improve this map</b>
          </div>
        </section>
      </main>
    </div>
  );
}
